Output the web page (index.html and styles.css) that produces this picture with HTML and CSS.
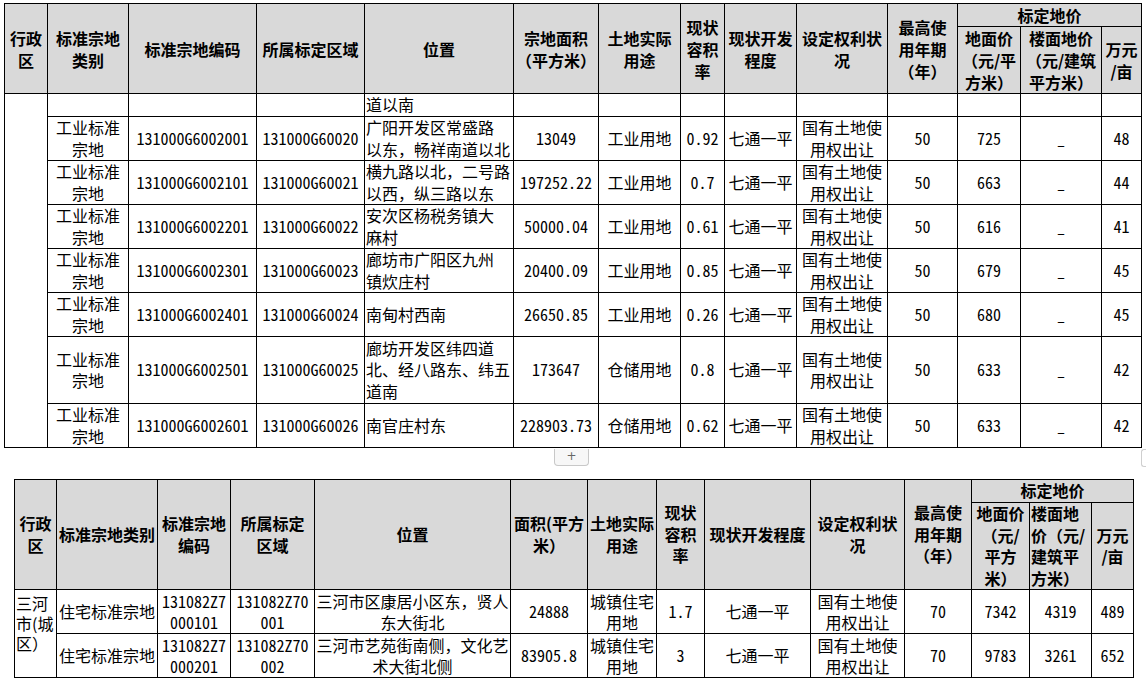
FILE: index.html
```html
<!DOCTYPE html>
<html lang="zh-CN">
<head>
<meta charset="utf-8">
<title>标定地价表</title>
<link rel="stylesheet" href="styles.css">
</head>
<body>
<div class="page">
  <table class="grid t1">
    <colgroup>
      <col><col><col><col><col><col><col><col><col><col><col><col><col><col>
    </colgroup>
    <thead>
      <tr class="h1">
        <th rowspan="2">行政<br>区</th>
        <th rowspan="2">标准宗地<br>类别</th>
        <th rowspan="2">标准宗地编码</th>
        <th rowspan="2">所属标定区域</th>
        <th rowspan="2">位置</th>
        <th rowspan="2">宗地面积<br>（平方米）</th>
        <th rowspan="2">土地实际<br>用途</th>
        <th rowspan="2">现状<br>容积<br>率</th>
        <th rowspan="2">现状开发<br>程度</th>
        <th rowspan="2">设定权利状<br>况</th>
        <th rowspan="2">最高使<br>用年期<br>（年）</th>
        <th colspan="3">标定地价</th>
      </tr>
      <tr class="h2">
        <th>地面价<br>（元/平<br>方米）</th>
        <th>楼面地价<br>（元/建筑<br>平方米）</th>
        <th>万元<br>/亩</th>
      </tr>
    </thead>
    <tbody>
      <tr class="r-short">
        <td rowspan="9"></td>
        <td></td><td></td><td></td>
        <td class="loc top">道以南</td>
        <td></td><td></td><td></td><td></td><td></td><td></td><td></td><td></td><td></td>
      </tr>
      <tr>
        <td>工业标准<br>宗地</td>
        <td class="num">131000G6002001</td>
        <td class="num">131000G60020</td>
        <td class="loc">广阳开发区常盛路<br>以东，畅祥南道以北</td>
        <td class="num">13049</td>
        <td>工业用地</td>
        <td class="num">0.92</td>
        <td>七通一平</td>
        <td>国有土地使<br>用权出让</td>
        <td class="num">50</td>
        <td class="num">725</td>
        <td class="num">_</td>
        <td class="num">48</td>
      </tr>
      <tr>
        <td>工业标准<br>宗地</td>
        <td class="num">131000G6002101</td>
        <td class="num">131000G60021</td>
        <td class="loc">横九路以北，二号路<br>以西，纵三路以东</td>
        <td class="num">197252.22</td>
        <td>工业用地</td>
        <td class="num">0.7</td>
        <td>七通一平</td>
        <td>国有土地使<br>用权出让</td>
        <td class="num">50</td>
        <td class="num">663</td>
        <td class="num">_</td>
        <td class="num">44</td>
      </tr>
      <tr>
        <td>工业标准<br>宗地</td>
        <td class="num">131000G6002201</td>
        <td class="num">131000G60022</td>
        <td class="loc">安次区杨税务镇大<br>麻村</td>
        <td class="num">50000.04</td>
        <td>工业用地</td>
        <td class="num">0.61</td>
        <td>七通一平</td>
        <td>国有土地使<br>用权出让</td>
        <td class="num">50</td>
        <td class="num">616</td>
        <td class="num">_</td>
        <td class="num">41</td>
      </tr>
      <tr>
        <td>工业标准<br>宗地</td>
        <td class="num">131000G6002301</td>
        <td class="num">131000G60023</td>
        <td class="loc">廊坊市广阳区九州<br>镇炊庄村</td>
        <td class="num">20400.09</td>
        <td>工业用地</td>
        <td class="num">0.85</td>
        <td>七通一平</td>
        <td>国有土地使<br>用权出让</td>
        <td class="num">50</td>
        <td class="num">679</td>
        <td class="num">_</td>
        <td class="num">45</td>
      </tr>
      <tr>
        <td>工业标准<br>宗地</td>
        <td class="num">131000G6002401</td>
        <td class="num">131000G60024</td>
        <td class="loc">南甸村西南</td>
        <td class="num">26650.85</td>
        <td>工业用地</td>
        <td class="num">0.26</td>
        <td>七通一平</td>
        <td>国有土地使<br>用权出让</td>
        <td class="num">50</td>
        <td class="num">680</td>
        <td class="num">_</td>
        <td class="num">45</td>
      </tr>
      <tr class="r-tall">
        <td>工业标准<br>宗地</td>
        <td class="num">131000G6002501</td>
        <td class="num">131000G60025</td>
        <td class="loc">廊坊开发区纬四道<br>北、经八路东、纬五<br>道南</td>
        <td class="num">173647</td>
        <td>仓储用地</td>
        <td class="num">0.8</td>
        <td>七通一平</td>
        <td>国有土地使<br>用权出让</td>
        <td class="num">50</td>
        <td class="num">633</td>
        <td class="num">_</td>
        <td class="num">42</td>
      </tr>
      <tr>
        <td>工业标准<br>宗地</td>
        <td class="num">131000G6002601</td>
        <td class="num">131000G60026</td>
        <td class="loc">南官庄村东</td>
        <td class="num">228903.73</td>
        <td>仓储用地</td>
        <td class="num">0.62</td>
        <td>七通一平</td>
        <td>国有土地使<br>用权出让</td>
        <td class="num">50</td>
        <td class="num">633</td>
        <td class="num">_</td>
        <td class="num">42</td>
      </tr>
    </tbody>
  </table>

  <div class="gap">
    <div class="add-btn">+</div>
    <div class="handle"></div>
  </div>

  <table class="grid t2">
    <colgroup>
      <col><col><col><col><col><col><col><col><col><col><col><col><col><col>
    </colgroup>
    <thead>
      <tr class="h1">
        <th rowspan="2">行政<br>区</th>
        <th rowspan="2">标准宗地类别</th>
        <th rowspan="2">标准宗地<br>编码</th>
        <th rowspan="2">所属标定<br>区域</th>
        <th rowspan="2">位置</th>
        <th rowspan="2">面积(平方<br>米）</th>
        <th rowspan="2">土地实际<br>用途</th>
        <th rowspan="2">现状<br>容积<br>率</th>
        <th rowspan="2">现状开发程度</th>
        <th rowspan="2">设定权利状<br>况</th>
        <th rowspan="2">最高使<br>用年期<br>（年）</th>
        <th colspan="3">标定地价</th>
      </tr>
      <tr class="h2">
        <th>地面价<br>（元/<br>平方<br>米）</th>
        <th class="lft">楼面地<br>价（元/<br>建筑平<br>方米）</th>
        <th>万元<br>/亩</th>
      </tr>
    </thead>
    <tbody>
      <tr>
        <td rowspan="2" class="loc top district">三河<br>市(城<br>区）</td>
        <td>住宅标准宗地</td>
        <td class="num">131082Z7<br>000101</td>
        <td class="num">131082Z70<br>001</td>
        <td>三河市区康居小区东，贤人<br>东大街北</td>
        <td class="num">24888</td>
        <td>城镇住宅<br>用地</td>
        <td class="num">1.7</td>
        <td>七通一平</td>
        <td>国有土地使<br>用权出让</td>
        <td class="num">70</td>
        <td class="num">7342</td>
        <td class="num">4319</td>
        <td class="num">489</td>
      </tr>
      <tr>
        <td>住宅标准宗地</td>
        <td class="num">131082Z7<br>000201</td>
        <td class="num">131082Z70<br>002</td>
        <td>三河市艺苑街南侧，文化艺<br>术大街北侧</td>
        <td class="num">83905.8</td>
        <td>城镇住宅<br>用地</td>
        <td class="num">3</td>
        <td>七通一平</td>
        <td>国有土地使<br>用权出让</td>
        <td class="num">70</td>
        <td class="num">9783</td>
        <td class="num">3261</td>
        <td class="num">652</td>
      </tr>
    </tbody>
  </table>
</div>
</body>
</html>
```

FILE: styles.css
```css
* {
  box-sizing: border-box;
}

body {
  margin: 0;
  background: #ffffff;
  color: #000000;
  font-family: "Noto Sans CJK SC", "Noto Sans", sans-serif;
  font-size: 16px;
}

.page {
  padding-top: 3px;
  display: flex;
  flex-direction: column;
  align-items: flex-start;
}

.grid {
  border-collapse: collapse;
  table-layout: fixed;
}

.grid th,
.grid td {
  border: 1px solid #000000;
  padding: 0;
  text-align: center;
  vertical-align: middle;
  white-space: nowrap;
  overflow: hidden;
}

.grid th {
  background: #d9d9d9;
  font-weight: 700;
}

.grid td {
  font-weight: 400;
}

.grid td.loc {
  text-align: left;
  padding-left: 1px;
}

.grid td.top {
  vertical-align: top;
}

.grid .num {
  font-feature-settings: "hwid" 1;
}

/* ---------- table 1 ---------- */
.t1 {
  margin-left: 4px;
  width: 1137px;
}

.t1 col:nth-child(1) { width: 43px; }
.t1 col:nth-child(2) { width: 81px; }
.t1 col:nth-child(3) { width: 128px; }
.t1 col:nth-child(4) { width: 108px; }
.t1 col:nth-child(5) { width: 149px; }
.t1 col:nth-child(6) { width: 85px; }
.t1 col:nth-child(7) { width: 82px; }
.t1 col:nth-child(8) { width: 44px; }
.t1 col:nth-child(9) { width: 72px; }
.t1 col:nth-child(10) { width: 91px; }
.t1 col:nth-child(11) { width: 70px; }
.t1 col:nth-child(12) { width: 63px; }
.t1 col:nth-child(13) { width: 81px; }
.t1 col:nth-child(14) { width: 40px; }

.t1 th {
  line-height: 22px;
}

.t1 .h1 {
  height: 21px;
}

.t1 .h2 {
  height: 67px;
}

.t1 td {
  line-height: 21.5px;
}

.t1 .r-short {
  height: 23px;
}

.t1 .r-tall {
  height: 67px;
}

/* ---------- gap with insert button ---------- */
.gap {
  width: 1146px;
  height: 31px;
  display: flex;
  align-items: flex-start;
}

.add-btn {
  margin-left: 554px;
  margin-top: 1px;
  width: 35px;
  height: 17px;
  border: 1px solid #c8c8c8;
  border-top: none;
  border-radius: 0 0 4px 4px;
  background: #f7f7f7;
  color: #666666;
  font-family: "DejaVu Sans", sans-serif;
  font-size: 12px;
  line-height: 15px;
  text-align: center;
}

.handle {
  margin-left: auto;
  margin-top: 1px;
  width: 5px;
  height: 18px;
  border: 1px solid #cfcfcf;
  border-right: none;
  border-radius: 3px 0 0 3px;
}

/* ---------- table 2 ---------- */
.t2 {
  margin-left: 14px;
  width: 1119px;
}

.t2 col:nth-child(1) { width: 42px; }
.t2 col:nth-child(2) { width: 101px; }
.t2 col:nth-child(3) { width: 73px; }
.t2 col:nth-child(4) { width: 84px; }
.t2 col:nth-child(5) { width: 196px; }
.t2 col:nth-child(6) { width: 77px; }
.t2 col:nth-child(7) { width: 69px; }
.t2 col:nth-child(8) { width: 48px; }
.t2 col:nth-child(9) { width: 106px; }
.t2 col:nth-child(10) { width: 94px; }
.t2 col:nth-child(11) { width: 67px; }
.t2 col:nth-child(12) { width: 58px; }
.t2 col:nth-child(13) { width: 62px; }
.t2 col:nth-child(14) { width: 42px; }

.t2 th {
  line-height: 21.5px;
}

.t2 th.lft {
  text-align: left;
  padding-left: 1px;
}

.t2 .h1 {
  height: 23px;
}

.t2 .h2 {
  height: 87px;
}

.t2 td {
  line-height: 21px;
  height: 44px;
}

.t2 td.district {
  line-height: 20px;
  padding-top: 3px;
}
```
